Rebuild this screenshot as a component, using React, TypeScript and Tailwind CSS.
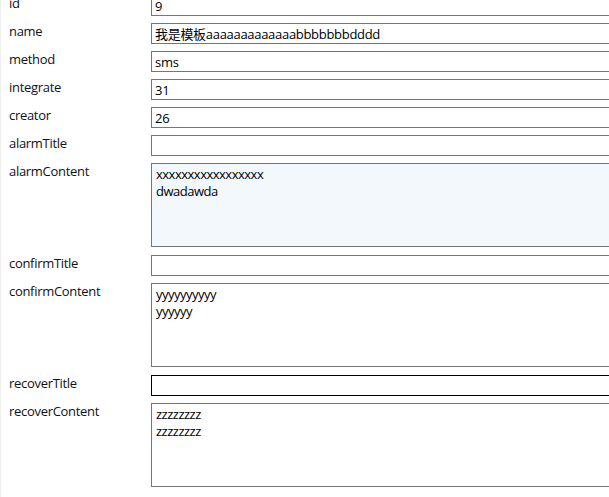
import React from "react";

type Field = { label: string; value: string; area?: boolean; tint?: boolean; focus?: boolean };

const FIELDS: Field[] = [
  { label: "id", value: "9" },
  { label: "name", value: "我是模板aaaaaaaaaaaaabbbbbbbdddd" },
  { label: "method", value: "sms" },
  { label: "integrate", value: "31" },
  { label: "creator", value: "26" },
  { label: "alarmTitle", value: "" },
  { label: "alarmContent", value: "xxxxxxxxxxxxxxxxx\ndwadawda", area: true, tint: true },
  { label: "confirmTitle", value: "" },
  { label: "confirmContent", value: "yyyyyyyyyy\nyyyyyy", area: true },
  { label: "recoverTitle", value: "", focus: true },
  { label: "recoverContent", value: "zzzzzzzz\nzzzzzzzz", area: true },
];

export default function App() {
  return (
    <div className="h-[497px] w-[609px] overflow-hidden bg-white border-l border-[#eeeeee] font-['Open_Sans','Noto_Sans_CJK_SC',sans-serif] text-[13px] tracking-[-0.3px] text-black">
      <div className="-mt-[5px] grid grid-cols-[142px_470px] gap-y-[7px] pl-[8px]">
        {FIELDS.map(f => (
          <React.Fragment key={f.label}>
            <div className="leading-[17px] text-[#111]">{f.label}</div>
            {f.area ? (
              <textarea
                readOnly
                value={f.value}
                className={
                  "block h-[84px] mb-px w-full resize-none border border-[#767676] px-[4px] pt-[2px] pb-0 leading-[17px] tracking-[-0.5px] outline-none font-['Open_Sans','Noto_Sans_CJK_SC',sans-serif] text-[13px] " +
                  (f.tint ? "bg-[#f3f8fd]" : "bg-white")
                }
              />
            ) : (
              <input
                readOnly
                value={f.value}
                className={
                  "block h-[21px] w-full border px-[3px] py-0 leading-[17px] tracking-[-0.3px] outline-none bg-white font-['Open_Sans','Noto_Sans_CJK_SC',sans-serif] text-[13px] " +
                  (f.focus ? "border-black" : "border-[#767676]")
                }
              />
            )}
          </React.Fragment>
        ))}
      </div>
    </div>
  );
}
